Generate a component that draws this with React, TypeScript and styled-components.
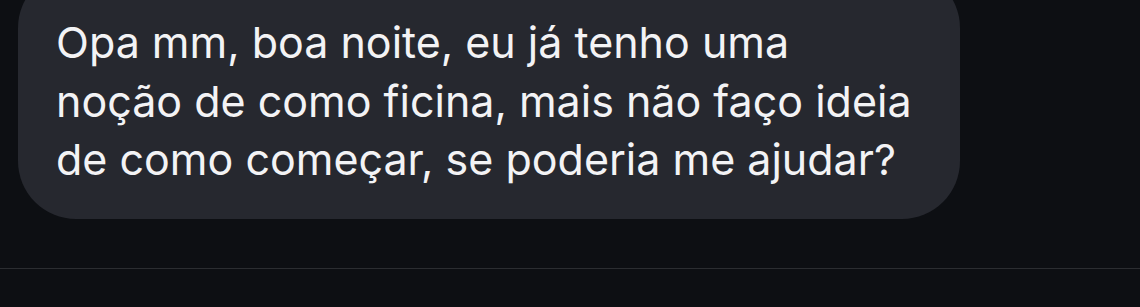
import React from "react";
import styled, { createGlobalStyle } from "styled-components";

const Global = createGlobalStyle`
  html, body { margin: 0; padding: 0; background: #0d0f13; }
  body { width: 1140px; height: 307px; overflow: hidden; }
`;

const Page = styled.div`
  width: 1140px;
  height: 307px;
  background: #0d0f13;
  display: flex;
  flex-direction: column;
`;

const Thread = styled.div`
  padding-left: 18px;
  margin-top: -30px;
`;

const Bubble = styled.div`
  width: 942px;
  height: 249px;
  box-sizing: border-box;
  background: #26282f;
  border-radius: 58px;
  padding: 43px 30px 0 38px;
  color: #f3f3f5;
  font-family: Inter, "Liberation Sans", sans-serif;
  font-size: 43px;
  line-height: 58.5px;
`;

const Line = styled.div`
  white-space: nowrap;
`;

const Divider = styled.div`
  margin-top: 49px;
  height: 1px;
  background: #2b2d31;
`;

export default function App() {
  return (
    <Page>
      <Global />
      <Thread>
        <Bubble>
          <Line>Opa mm, boa noite, eu já tenho uma</Line>
          <Line>noção de como ficina, mais não faço ideia</Line>
          <Line>de como começar, se poderia me ajudar?</Line>
        </Bubble>
      </Thread>
      <Divider />
    </Page>
  );
}
